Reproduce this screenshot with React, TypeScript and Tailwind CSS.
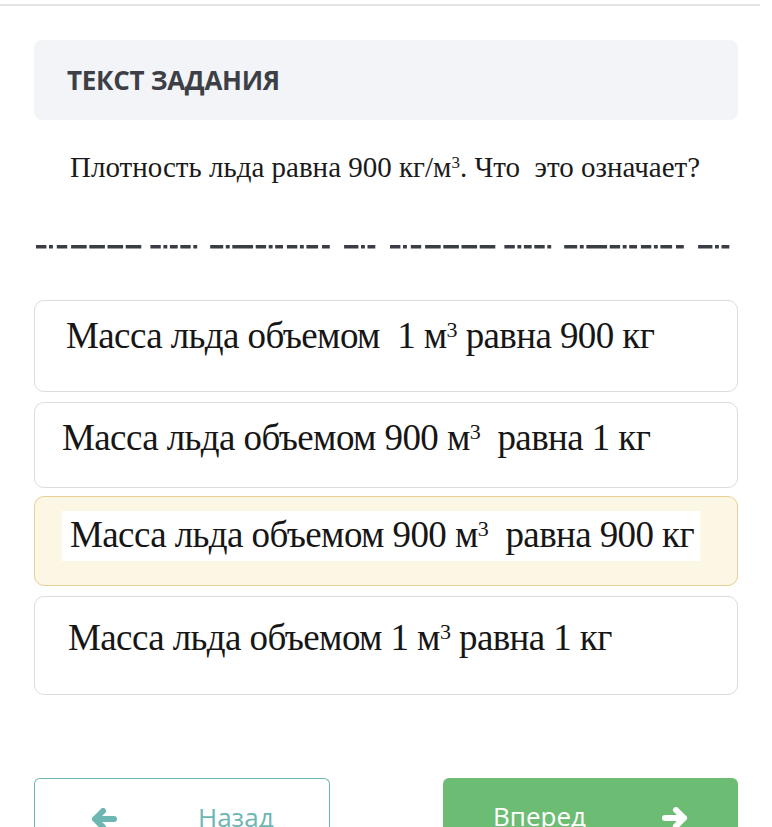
import React from "react";

const serif = { fontFamily: '"Liberation Serif", "Times New Roman", serif' };
const sans = { fontFamily: '"Open Sans", sans-serif' };

function Dashes() {
  const pattern: [number, number][] = [
    [0, 8], [10, 3], [16, 8], [27, 12], [41, 12], [55, 12], [69, 12],
    [88, 8], [98, 3], [103, 6], [111, 8], [121, 3],
    [134, 10], [146, 3], [151, 16], [169, 8], [179, 3], [184, 6], [193, 8], [203, 3], [208, 9], [220, 6],
    [237, 11], [250, 3], [255, 6],
  ];
  const k = 1.3;
  const first = pattern.map(([x, w]) => [x * k, w * k] as [number, number]);
  const second = first.map(([x, w]) => [x + 354, w] as [number, number]);
  const all = [...first, ...second];
  return (
    <svg width="704" height="6" viewBox="0 0 704 6" className="block">
      {all.map(([x, w], i) => (
        <rect key={i} x={x} y={1} width={w} height={3.5} fill="#3b3d44" />
      ))}
    </svg>
  );
}

function ArrowLeft({ color }: { color: string }) {
  return (
    <svg width="28" height="22" viewBox="0 0 28 22">
      <path
        d="M24 11 H5 M13 3 L5 11 L13 19"
        fill="none"
        stroke={color}
        strokeWidth="6"
        strokeLinecap="round"
        strokeLinejoin="round"
      />
    </svg>
  );
}

function ArrowRight({ color }: { color: string }) {
  return (
    <svg width="28" height="22" viewBox="0 0 28 22">
      <path
        d="M4 11 H23 M15 3 L23 11 L15 19"
        fill="none"
        stroke={color}
        strokeWidth="6"
        strokeLinecap="round"
        strokeLinejoin="round"
      />
    </svg>
  );
}

const optText = "text-[37px] leading-[40px] text-[#161616] tracking-[-0.6px]";

export default function App() {
  return (
    <div className="w-[772px] h-[827px] bg-white overflow-hidden">
      <div className="h-[4px]" />
      <div className="h-[2px] w-[760px] bg-[#e3e3e5]" />
      <div className="px-[34px] pt-[34px] flex flex-col">
        <div className="h-[80px] rounded-[8px] bg-[#f3f4f7] flex items-center pl-[33px]">
          <span className="text-[26px] font-bold text-[#3c3f46] tracking-[-0.3px]" style={sans}>
            ТЕКСТ ЗАДАНИЯ
          </span>
        </div>
        <div className="h-[96px] flex items-center pl-[36px] pb-[2px]">
          <span className="text-[29px] text-[#1a1a1a] leading-none tracking-[0px]" style={serif}>
            Плотность льда равна 900 кг/м<sup className="text-[17px]">3</sup>. Что&nbsp; это означает?
          </span>
        </div>
        <div className="pl-[2px] pt-[28px]">
          <Dashes />
        </div>
        <div className="mt-[50px] flex flex-col gap-[10px]">
          <div className="h-[92px] rounded-[10px] border border-[#dcdcdf] bg-white pl-[31px] pt-[15px]">
            <div className={optText} style={serif}>
              Масса льда объемом&nbsp; 1 м<sup className="text-[22px]">3</sup> равна 900 кг
            </div>
          </div>
          <div className="h-[86px] rounded-[10px] border border-[#dcdcdf] bg-white pl-[27px] pt-[15px]">
            <div className={optText} style={serif}>
              Масса льда объемом 900 м<sup className="text-[22px]">3</sup>&nbsp; равна 1 кг
            </div>
          </div>
          <div className="h-[90px] rounded-[10px] border border-[#e9cf95] bg-[#fcf6e4] pl-[27px] pt-[14px] -mt-[2px]">
            <div className={`w-[638px] h-[50px] bg-white pl-[8px] pt-[4px] ${optText}`} style={serif}>
              Масса льда объемом 900 м<sup className="text-[22px]">3</sup>&nbsp; равна 900 кг
            </div>
          </div>
          <div className="h-[99px] rounded-[10px] border border-[#dcdcdf] bg-white pl-[33px] pt-[21px]">
            <div className={optText} style={serif}>
              Масса льда объемом 1 м<sup className="text-[22px]">3</sup> равна 1 кг
            </div>
          </div>
        </div>
        <div className="mt-[83px] flex justify-between">
          <div className="w-[296px] h-[60px] rounded-t-[6px] border border-b-0 border-[#6db6b2] flex items-start pt-[20px]">
            <div className="ml-[55px] mt-[9px]">
              <ArrowLeft color="#6db6b2" />
            </div>
            <span className="ml-[80px] text-[26px] text-[#6db6b2] leading-[36px]" style={sans}>
              Назад
            </span>
          </div>
          <div className="w-[295px] h-[60px] rounded-t-[6px] bg-[#6cbd73] flex items-start pt-[20px]">
            <span className="ml-[50px] text-[26px] text-white leading-[36px]" style={sans}>
              Вперед
            </span>
            <div className="ml-[75px] mt-[9px]">
              <ArrowRight color="#ffffff" />
            </div>
          </div>
        </div>
      </div>
    </div>
  );
}
